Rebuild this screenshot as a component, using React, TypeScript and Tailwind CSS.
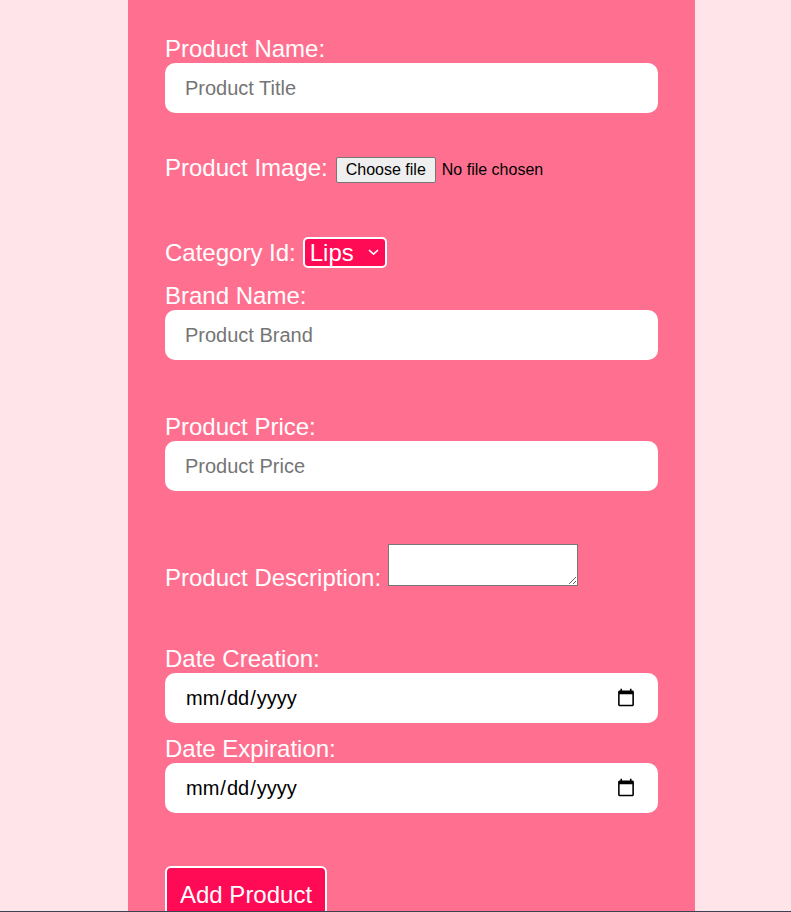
import React from "react";

const labelCls = "block text-[24px] leading-[28px] text-white";
const inputCls =
  "block w-full h-[50px] rounded-[10px] bg-white px-[20px] text-[20px] text-black placeholder:text-[#757575] outline-none";

export default function App() {
  return (
    <div
      className="relative h-[912px] w-full overflow-hidden bg-[#ffe4e9]"
      style={{ fontFamily: '"Liberation Sans", Arial, sans-serif' }}
    >
      <form className="ml-[128px] flex min-h-[912px] w-[567px] flex-col bg-[#ff7090] px-[37px] pt-[35px]">
        <label className={labelCls}>Product Name:</label>
        <input className={inputCls} placeholder="Product Title" />

        <div className="mt-[41px] flex h-[28px] items-center">
          <span className="text-[24px] leading-[28px] text-white">Product Image:</span>
          <button
            type="button"
            className="ml-[8px] mt-[3px] h-[26px] rounded-[2px] border border-[#767676] bg-[#efefef] px-[9px] text-[16px] leading-[24px] text-black"
          >
            Choose file
          </button>
          <span className="ml-[6px] mt-[3px] text-[16px] leading-[24px] text-black">No file chosen</span>
        </div>

        <div className="mt-[55px] flex items-center">
          <span className="text-[24px] leading-[28px] text-white">Category Id:</span>
          <div className="relative ml-[7px]">
            <select className="h-[31px] w-[84px] appearance-none rounded-[5px] border-2 border-white bg-[#ff0a54] pl-[5px] text-[24px] leading-[27px] text-white outline-none">
              <option>Lips</option>
            </select>
            <svg
              className="pointer-events-none absolute right-[8px] top-[12px]"
              width="11"
              height="7"
              viewBox="0 0 11 7"
              fill="none"
            >
              <path d="M1.5 1.5 L5.5 5.2 L9.5 1.5" stroke="white" strokeWidth="1.7" strokeLinecap="round" strokeLinejoin="round" />
            </svg>
          </div>
        </div>

        <label className={`${labelCls} mt-[14px]`}>Brand Name:</label>
        <input className={inputCls} placeholder="Product Brand" />

        <label className={`${labelCls} mt-[53px]`}>Product Price:</label>
        <input className={inputCls} placeholder="Product Price" />

        <div className="mt-[53px] flex items-start">
          <span className="mt-[20px] text-[24px] leading-[28px] text-white">Product Description:</span>
          <textarea className="ml-[7px] h-[42px] w-[190px] border border-[#767676] bg-white text-[16px] text-black outline-none" />
        </div>

        <label className={`${labelCls} mt-[53px]`}>Date Creation:</label>
        <input type="date" className={inputCls} />

        <label className={`${labelCls} mt-[12px]`}>Date Expiration:</label>
        <input type="date" className={inputCls} />

        <div className="mt-[53px]">
          <button
            type="button"
            className="rounded-[6px] border-2 border-white bg-[#ff0a54] px-[13px] pb-[12px] pt-[13px] text-[24px] leading-[28px] text-white"
          >
            Add Product
          </button>
        </div>
      </form>
      <div className="absolute bottom-0 left-0 h-px w-full bg-[#3c4250]" />
    </div>
  );
}
